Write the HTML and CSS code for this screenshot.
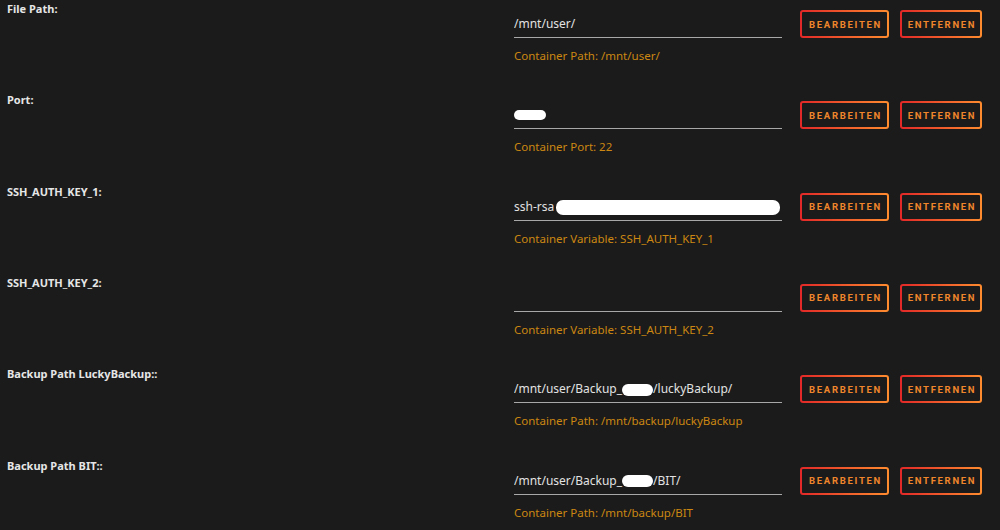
FILE: index.html
```html
<!DOCTYPE html>
<html lang="de">
<head>
  <meta charset="UTF-8">
  <title>Container Einstellungen</title>
  <link rel="stylesheet" href="styles.css">
</head>
<body>
  <div class="config-list">

    <div class="config-row">
      <div class="config-label">File Path:</div>
      <div class="config-field">
        <div class="config-value">/mnt/user/</div>
        <div class="config-hint">Container Path: /mnt/user/</div>
      </div>
      <div class="config-actions">
        <button class="btn btn-edit">Bearbeiten</button>
        <button class="btn btn-remove">Entfernen</button>
      </div>
    </div>

    <div class="config-row">
      <div class="config-label">Port:</div>
      <div class="config-field">
        <div class="config-value"><span class="redact redact-port"></span></div>
        <div class="config-hint">Container Port: 22</div>
      </div>
      <div class="config-actions">
        <button class="btn btn-edit">Bearbeiten</button>
        <button class="btn btn-remove">Entfernen</button>
      </div>
    </div>

    <div class="config-row">
      <div class="config-label">SSH_AUTH_KEY_1:</div>
      <div class="config-field">
        <div class="config-value">ssh-rsa <span class="redact redact-key"></span></div>
        <div class="config-hint">Container Variable: SSH_AUTH_KEY_1</div>
      </div>
      <div class="config-actions">
        <button class="btn btn-edit">Bearbeiten</button>
        <button class="btn btn-remove">Entfernen</button>
      </div>
    </div>

    <div class="config-row">
      <div class="config-label">SSH_AUTH_KEY_2:</div>
      <div class="config-field">
        <div class="config-value"></div>
        <div class="config-hint">Container Variable: SSH_AUTH_KEY_2</div>
      </div>
      <div class="config-actions">
        <button class="btn btn-edit">Bearbeiten</button>
        <button class="btn btn-remove">Entfernen</button>
      </div>
    </div>

    <div class="config-row">
      <div class="config-label">Backup Path LuckyBackup::</div>
      <div class="config-field">
        <div class="config-value">/mnt/user/Backup_<span class="redact redact-name"></span>/luckyBackup/</div>
        <div class="config-hint">Container Path: /mnt/backup/luckyBackup</div>
      </div>
      <div class="config-actions">
        <button class="btn btn-edit">Bearbeiten</button>
        <button class="btn btn-remove">Entfernen</button>
      </div>
    </div>

    <div class="config-row">
      <div class="config-label">Backup Path BIT::</div>
      <div class="config-field">
        <div class="config-value">/mnt/user/Backup_<span class="redact redact-name"></span>/BIT/</div>
        <div class="config-hint">Container Path: /mnt/backup/BIT</div>
      </div>
      <div class="config-actions">
        <button class="btn btn-edit">Bearbeiten</button>
        <button class="btn btn-remove">Entfernen</button>
      </div>
    </div>

  </div>
</body>
</html>
```

FILE: styles.css
```css
body {
  margin: 0;
  padding: 0;
  background-color: #1b1b1b;
  font-family: "Noto Sans", "Open Sans", sans-serif;
  color: #e4e4e4;
  overflow: hidden;
}

.config-list {
  display: flex;
  flex-direction: column;
}

.config-row {
  display: flex;
  height: 91.33px;
  box-sizing: border-box;
}

.config-label {
  width: 514px;
  padding-left: 7px;
  box-sizing: border-box;
  font-size: 11px;
  font-weight: bold;
  line-height: 18px;
  color: #e6e6e6;
}

.config-field {
  width: 268px;
  margin-top: 10px;
}

.config-value {
  height: 28px;
  box-sizing: border-box;
  border-bottom: 1px solid #a8a8a8;
  font-size: 12px;
  line-height: 28px;
  color: #e2e2e2;
  white-space: nowrap;
  overflow: hidden;
}

.config-hint {
  margin-top: 9px;
  font-size: 11.5px;
  line-height: 18px;
  color: #cc8712;
  white-space: nowrap;
}

.config-actions {
  display: flex;
  gap: 11px;
  margin-left: 18px;
  margin-top: 10px;
  height: 28px;
}

.btn {
  height: 28px;
  padding: 0 0 0 2px;
  border: 2px solid transparent;
  border-radius: 3px;
  background: linear-gradient(#1b1b1b, #1b1b1b) padding-box,
              linear-gradient(90deg, #e22828, #ff8c2f) border-box;
  color: #f0862c;
  font-family: Roboto, "Noto Sans", sans-serif;
  font-size: 9.5px;
  font-weight: bold;
  letter-spacing: 1.7px;
  text-transform: uppercase;
  cursor: pointer;
}

.btn-edit {
  width: 89px;
}

.btn-remove {
  width: 82px;
}

.redact {
  display: inline-block;
  background: #ffffff;
  border-radius: 6px;
  vertical-align: middle;
}

.redact-port {
  width: 32px;
  height: 10px;
  margin-top: -2px;
  border-radius: 5px;
}

.redact-key {
  width: 224px;
  height: 15px;
  border-radius: 7px;
  margin-left: -1px;
}

.redact-name {
  width: 31px;
  height: 12px;
  border-radius: 6px;
  margin-left: 0;
}
```
